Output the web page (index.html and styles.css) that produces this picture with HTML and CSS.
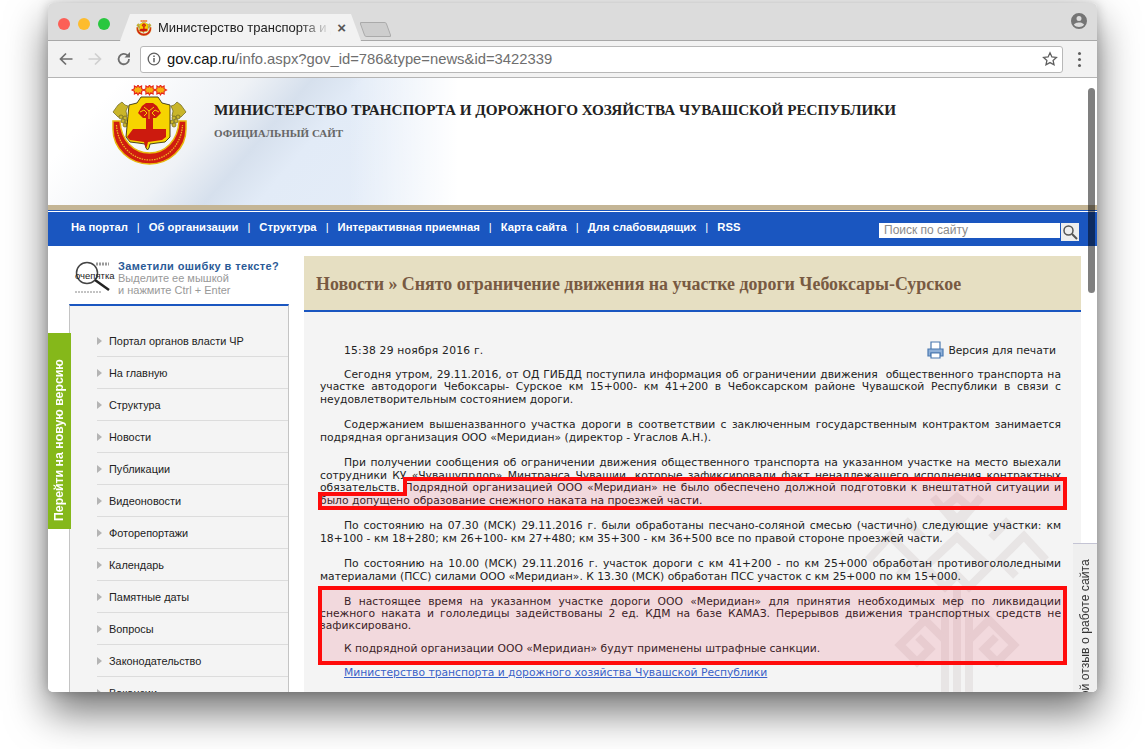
FILE: index.html
```html
<!DOCTYPE html>
<html lang="ru">
<head>
  <meta charset="UTF-8">
  <title>Министерство транспорта и дорожного хозяйства</title>
  <link rel="stylesheet" href="styles.css">
</head>
<body>
  <svg class="defs" width="0" height="0">
    <defs>
      <path id="sun" d="M0-5l1.300 2.300 2.300-1.300 0 2.700 2.400 1.300-2.400 1.300 0 2.700-2.300-1.300L0 5l-1.300-2.300-2.300 1.300 0-2.700-2.400-1.300 2.400-1.300 0-2.700 2.300 1.300z"/>
      <symbol id="emblem" viewBox="0 0 80 80">
        <g fill="#f5b010" stroke="#e8241a" stroke-width="1.100">
          <use href="#sun" x="28" y="5"/>
          <use href="#sun" x="39.500" y="5"/>
          <use href="#sun" x="50.500" y="5"/>
        </g>
        <!-- ribbon -->
        <path d="M3 36h7c1 20 14 32 29.500 32S68 56 69 36h7v8c0 20-17 35-36.500 35S3 64 3 44z" fill="#d01c10" stroke="#e8b80c" stroke-width="1.500"/>
        <path d="M6.500 40c1 20 16 35 33 35s32-15 33-35" fill="none" stroke="#f0c020" stroke-width="1.200" stroke-dasharray="1.500 1"/>
        <!-- grapes -->
        <g fill="#c9b52a" stroke="#6b6420" stroke-width=".7">
          <path d="M3 27l5-7 4-3 3 3 3 1-2 5 1 5-5 2-4-1-3-3z"/>
          <path d="M76 27l-5-7-4-3-3 3-3 1 2 5-1 5 5 2 4-1 3-3z"/>
          <circle cx="11" cy="32" r="2"/><circle cx="15" cy="33" r="2"/><circle cx="13" cy="36" r="2"/><circle cx="17" cy="37" r="2"/><circle cx="15" cy="40" r="2"/>
          <circle cx="68" cy="32" r="2"/><circle cx="64" cy="33" r="2"/><circle cx="66" cy="36" r="2"/><circle cx="62" cy="37" r="2"/><circle cx="64" cy="40" r="2"/>
        </g>
        <!-- shield -->
        <path d="M19 20l8-2 4-6h17l4 6 8 2v32l-5 5-8 1-7 1-1 4-1.500 2-1.500-2-1-4-7-1-8-1-4-5z" fill="#f7d400" stroke="#3a3410" stroke-width=".9"/>
        <path d="M23 44h13V30h7v14h13v8l-4 3-7 1-7 1-1 4-1 2-1-2-1-4-7-1-7-1-3-3z" fill="#cc1a0e"/>
        <path d="M28 28l4-7 4-3h7l4 3 4 7-5 5h-5v1h-3v-1h-5z" fill="#cc1a0e"/>
        <g fill="none" stroke="#f7d400" stroke-width="1">
          <path d="M34 22l5 4 5-4M39 26v8M30 27l4-2 3 3-3 3M49 27l-4-2-3 3 3 3"/>
        </g>
      </symbol>
    </defs>
  </svg>

  <div class="window">
    <div class="tabbar">
      <div class="lights">
        <span class="light red"></span>
        <span class="light amber"></span>
        <span class="light green"></span>
      </div>
      <div class="tab">
        <svg class="favicon" width="16" height="16"><use href="#emblem"/></svg>
        <span class="tab-title">Министерство транспорта и д</span>
        <span class="tab-close">×</span>
      </div>
      <div class="new-tab"></div>
      <svg class="profile" width="16" height="16" viewBox="0 0 16 16">
        <path fill="#757575" fill-rule="evenodd" d="M8 0a8 8 0 1 1 0 16A8 8 0 0 1 8 0zm0 3a2.500 2.500 0 1 0 0 5 2.500 2.500 0 0 0 0-5zM3 11.800C4 13.300 6 14 8 14s4-.7 5-2.200C13 10.300 10 9.400 8 9.400s-5 .9-5 2.400z"/>
      </svg>
    </div>

    <div class="toolbar">
      <svg class="tool" width="16" height="16" viewBox="0 0 16 16"><path d="M14.500 8H3M8 2.500L2.500 8 8 13.500" fill="none" stroke="#6e6e6e" stroke-width="1.700"/></svg>
      <svg class="tool" width="16" height="16" viewBox="0 0 16 16"><path d="M1.500 8H13M8 2.500L13.500 8 8 13.500" fill="none" stroke="#cfcfcf" stroke-width="1.700"/></svg>
      <svg class="tool" width="16" height="16" viewBox="0 0 16 16"><path d="M13 8a5.200 5.200 0 1 1-1.500-3.600" fill="none" stroke="#6e6e6e" stroke-width="1.800"/><path d="M14 1v5.500H8.500z" fill="#6e6e6e"/></svg>
      <div class="omnibox">
        <svg width="14" height="14" viewBox="0 0 14 14"><circle cx="7" cy="7" r="5.800" fill="none" stroke="#5f5f5f" stroke-width="1.300"/><path d="M7 6v4.300M7 3.400v1.500" stroke="#5f5f5f" stroke-width="1.500"/></svg>
        <span class="url"><b>gov.cap.ru</b>/info.aspx?gov_id=786&amp;type=news&amp;id=3422339</span>
        <svg class="star" width="16" height="16" viewBox="0 0 16 16"><path d="M8 1.800l1.900 4.100 4.500.5-3.300 3 .9 4.400L8 11.600l-4 2.200.9-4.400-3.300-3 4.500-.5z" fill="none" stroke="#5f5f5f" stroke-width="1.300"/></svg>
      </div>
      <div class="dots"><i></i><i></i><i></i></div>
    </div>

    <div class="page">
      <div class="site-head">
        <svg class="site-logo" width="80" height="80"><use href="#emblem"/></svg>
        <div class="site-titles">
          <h1>МИНИСТЕРСТВО ТРАНСПОРТА И ДОРОЖНОГО ХОЗЯЙСТВА ЧУВАШСКОЙ РЕСПУБЛИКИ</h1>
          <h4>ОФИЦИАЛЬНЫЙ САЙТ</h4>
        </div>
      </div>
      <div class="tan-line"></div>

      <div class="nav">
        <a>На портал</a><span>|</span>
        <a>Об организации</a><span>|</span>
        <a>Структура</a><span>|</span>
        <a>Интерактивная приемная</a><span>|</span>
        <a>Карта сайта</a><span>|</span>
        <a>Для слабовидящих</a><span>|</span>
        <a>RSS</a>
        <div class="search">
          <div class="search-input">Поиск по сайту</div>
          <div class="search-btn">
            <svg width="16" height="16" viewBox="0 0 16 16"><circle cx="6.500" cy="6.500" r="4.500" fill="none" stroke="#555" stroke-width="1.500"/><path d="M10 10l5 5" stroke="#555" stroke-width="2"/></svg>
          </div>
        </div>
      </div>

      <div class="columns">
        <div class="sidebar">
          <div class="typo">
            <div class="typo-icon">
              <svg width="38" height="38" viewBox="0 0 38 38"><circle cx="13" cy="15" r="10.500" fill="none" stroke="#444" stroke-width="1.500"/><path d="M21 22l14 10" stroke="#222" stroke-width="2.500"/><path d="M22 6h13" stroke="#999" stroke-width="3" stroke-dasharray="2 1"/><path d="M1 34h27" stroke="#888" stroke-width="1" stroke-dasharray="2 1"/></svg>
              <span>очепятка</span>
            </div>
            <div class="typo-text">
              <strong>Заметили ошибку в тексте?</strong>
              Выделите ее мышкой<br>и нажмите Ctrl + Enter
            </div>
          </div>
          <ul class="menu">
            <li>Портал органов власти ЧР</li>
            <li>На главную</li>
            <li>Структура</li>
            <li>Новости</li>
            <li>Публикации</li>
            <li>Видеоновости</li>
            <li>Фоторепортажи</li>
            <li>Календарь</li>
            <li>Памятные даты</li>
            <li>Вопросы</li>
            <li>Законодательство</li>
            <li>Вакансии</li>
          </ul>
        </div>

        <div class="main">
          <h2 class="news-title">Новости » Снято ограничение движения на участке дороги Чебоксары-Сурское</h2>
          <div class="article">
            <svg class="watermark" width="200" height="202" viewBox="860 490 200 202">
              <g fill="none" stroke="#e8e5e5" stroke-width="8">
                <path d="M957 497l-12 10 12 12 12-12zM933 497l24 28 24-28"/>
                <path d="M957 537l-32 30 20 20 12-12 12 12 20-20z"/>
                <path d="M868 560l22-24 24 24-16 16M1046 560l-22-24-24 24 16 16M905 520l18 18M1009 520l-18 18"/>
                <path d="M945 692V610M957 692V590M969 692V610"/>
                <path d="M945 640l-20-20-25 25 17 17 13-13-12-12M969 640l20-20 25 25-17 17-13-13 12-12"/>
              </g>
            </svg>
            <div class="print-row">
              <span class="news-date">15:38 29 ноября 2016 г.</span>
              <span class="print-link">
                <svg width="17" height="18" viewBox="0 0 17 18"><path d="M4 8V1h9v7" fill="#fff" stroke="#4a78b0" stroke-width="1.200"/><path d="M1 8h15v7h-3v-3H4v3H1z" fill="#8fb0d8" stroke="#4a78b0" stroke-width="1.200"/><path d="M4 12h9v5H4z" fill="#fff" stroke="#4a78b0" stroke-width="1.200"/></svg>
                Версия для печати
              </span>
            </div>
            <p>Сегодня утром, 29.11.2016, от ОД ГИБДД поступила информация об ограничении движения &nbsp;общественного транспорта на участке автодороги Чебоксары- Сурское км 15+000- км 41+200 в Чебоксарском районе Чувашской Республики в связи с неудовлетворительным состоянием дороги.</p>
            <p>Содержанием вышеназванного участка дороги в соответствии с заключенным государственным контрактом занимается подрядная организация ООО «Меридиан» (директор - Угаслов А.Н.).</p>
            <p>При получении сообщения об ограничении движения общественного транспорта на указанном участке на место выехали сотрудники КУ «Чувашупрдор» Минтранса Чувашии, которые зафиксировали факт ненадлежащего исполнения контрактных обязательств. Подрядной организацией ООО «Меридиан» не было обеспечено должной подготовки к внештатной ситуации и было допущено образование снежного наката на проезжей части.</p>
            <p>По состоянию на 07.30 (МСК) 29.11.2016 г. были обработаны песчано-соляной смесью (частично) следующие участки: км 18+100 - км 18+280; км 26+100- км 27+480; км 35+300 - км 36+500 все по правой стороне проезжей части.</p>
            <p>По состоянию на 10.00 (МСК) 29.11.2016 г. участок дороги с км 41+200 - по км 25+000 обработан противогололедными материалами (ПСС) силами ООО «Меридиан». К 13.30 (МСК) обработан ПСС участок с км 25+000 по км 15+000.</p>
            <p class="tight">В настоящее время на указанном участке дороги ООО «Меридиан» для принятия необходимых мер по ликвидации снежного наката и гололедицы задействованы 2 ед. КДМ на базе КАМАЗ. Перерывов движения транспортных средств не зафиксировано.</p>
            <p class="tight">К подрядной организации ООО «Меридиан» будут применены штрафные санкции.</p>
            <p class="tight"><a class="source">Министерство транспорта и дорожного хозяйства Чувашской Республики</a></p>
          </div>
        </div>
      </div>

      <svg class="marks" width="1049" height="614" viewBox="0 0 1049 614">
        <path d="M357 401H1017V430H272V416H357z" fill="#e62846" fill-opacity=".13" stroke="#ff0b0b" stroke-width="4"/>
        <rect x="272" y="510" width="745" height="75" fill="#e62846" fill-opacity=".13" stroke="#ff0b0b" stroke-width="4"/>
      </svg>

      <div class="new-version">Перейти на новую версию</div>
      <div class="feedback"><span>Оставьте свой отзыв о работе сайта</span></div>
      <div class="scrollbar"></div>
    </div>
  </div>
</body>
</html>
```

FILE: styles.css
```css
/* Basic reset */
* {
  margin: 0;
  padding: 0;
  box-sizing: border-box;
}
html, body {
  height: 749px;
  overflow: hidden;
}
body {
  background-color: #fff;
  font-family: 'Liberation Sans', Arial, sans-serif;
  color: #222;
}
.defs {
  position: absolute;
}
.window {
  position: relative;
  width: 1049px;
  height: 689px;
  margin: 3px 0 0 48px;
  border-radius: 5px;
  overflow: hidden;
  box-shadow: 0 20px 40px rgba(0, 0, 0, 0.55), 0 0 12px rgba(0, 0, 0, 0.2);
}

/* browser chrome */
.tabbar {
  display: flex;
  align-items: flex-end;
  height: 38px;
  padding-left: 10px;
  background-color: #dcdcdc;
  border-bottom: 1px solid #a8a8a8;
}
.lights {
  display: flex;
  gap: 8px;
  align-self: flex-start;
  margin-top: 15px;
  width: 66px;
}
.light {
  width: 12px;
  height: 12px;
  border-radius: 50%;
}
.red { background-color: #fc5f57; }
.amber { background-color: #fdbc2e; }
.green { background-color: #29c73f; }
.tab {
  display: flex;
  align-items: center;
  gap: 6px;
  flex: none;
  width: 241px;
  height: 27px;
  margin: 0 0 -1px -4px;
  padding: 0 15px 0 16px;
  background-color: #f2f2f2;
  clip-path: polygon(0 100%, 10px 0, 231px 0, 241px 100%);
}
.favicon {
  flex: none;
}
.tab-title {
  flex: 1;
  font-size: 13px;
  white-space: nowrap;
  overflow: hidden;
  color: #222;
  mask-image: linear-gradient(90deg, #000 82%, transparent 100%);
}
.tab-close {
  font-size: 15px;
  font-weight: bold;
  color: #555;
}
.new-tab {
  width: 27px;
  height: 15px;
  margin: 0 0 3px 1px;
  background-color: #cdcdcd;
  border: 1px solid #aaa;
  border-radius: 2px;
  transform: skewX(20deg);
}
.profile {
  margin: 0 10px 11px auto;
}
.toolbar {
  display: flex;
  align-items: center;
  height: 37px;
  padding-left: 10px;
  background-color: #f2f2f2;
  border-bottom: 1px solid #b5b5b5;
}
.tool {
  margin-right: 13px;
}
.omnibox {
  display: flex;
  align-items: center;
  gap: 6px;
  width: 923px;
  height: 27px;
  margin-left: -5px;
  padding: 0 4px 0 6px;
  background-color: #fff;
  border: 1px solid #b8b8b8;
  border-radius: 3px;
}
.url {
  flex: 1;
  font-size: 14.800px;
  color: #6e6e6e;
}
.url b {
  font-weight: normal;
  color: #111;
}
.dots {
  display: flex;
  flex-direction: column;
  gap: 3px;
  margin-left: 15px;
}
.dots i {
  width: 3px;
  height: 3px;
  border-radius: 50%;
  background-color: #5f5f5f;
}

/* page */
.page {
  position: relative;
  height: 614px;
  background-color: #fff;
  overflow: hidden;
}
.site-head {
  display: flex;
  height: 127px;
  padding: 7px 0 0 62px;
  background:
    linear-gradient(90deg, rgba(255, 255, 255, 0) 300px, #fff 410px) no-repeat,
    linear-gradient(131deg, #fff 14%, #eff2f6 38%, #d6e0ed 50%, #e2ebf7 60%, #e6eef9 100%) no-repeat 0 0 / 420px 100%;
}
.site-logo {
  flex: none;
}
.site-titles {
  margin: 16px 0 0 24px;
  font-family: 'Liberation Serif', 'Times New Roman', serif;
}
.site-titles h1 {
  font-size: 15.200px;
  line-height: 18px;
  color: #222;
}
.site-titles h4 {
  margin-top: 7px;
  font-size: 11px;
  line-height: 14px;
  color: #666;
}
.tan-line {
  height: 5px;
  background-color: #c4b595;
}
.nav {
  display: flex;
  align-items: center;
  height: 36px;
  padding: 0 0 3px 23px;
  background-color: #1a56c0;
  border-top: 1px solid #1a56c0;
  box-shadow: inset 0 1px 0 #fff;
  color: #fff;
  font-size: 11.250px;
  font-weight: bold;
}
.nav span {
  margin: 0 9px;
  font-weight: normal;
}
.search {
  display: flex;
  align-items: flex-start;
  margin: 10px 18px 0 auto;
}
.search-input {
  width: 181px;
  height: 15px;
  padding-left: 5px;
  background-color: #fff;
  color: #8a8a8a;
  font-size: 12px;
  font-weight: normal;
  line-height: 15px;
}
.search-btn {
  display: flex;
  align-items: center;
  justify-content: center;
  width: 18px;
  height: 18px;
  margin-left: 1px;
  background-color: #eee;
}
.columns {
  display: flex;
  padding-left: 21px;
}
.sidebar {
  flex: none;
  width: 220px;
}
.typo {
  display: flex;
  height: 58px;
  padding: 12px 0 0 5px;
}
.typo-icon {
  position: relative;
  width: 39px;
  height: 38px;
}
.typo-icon span {
  position: absolute;
  top: 12px;
  left: 1px;
  font-size: 9.500px;
  color: #222;
}
.typo-text {
  margin: 2px 0 0 5px;
  font-size: 11px;
  line-height: 12px;
  color: #999;
}
.typo-text strong {
  display: block;
  color: #2a5a96;
  letter-spacing: 0.4px;
}
.menu {
  height: 400px;
  padding: 19px 0 0 27px;
  list-style: none;
  background-color: #f4f4f4;
  border: 1px solid #c4c4c4;
  border-top: 2px solid #1a56c0;
}
.menu li {
  position: relative;
  height: 32px;
  padding-left: 12px;
  font-size: 10.900px;
  line-height: 32px;
  color: #222;
  border-bottom: 1px solid #dcdcdc;
}
.menu li::before {
  content: '';
  position: absolute;
  top: 12px;
  left: 0;
  border: 4px solid transparent;
  border-left: 5px solid #b4b4b4;
}
.main {
  flex: none;
  width: 777px;
  margin: 10px 0 0 15px;
}
.news-title {
  display: flex;
  align-items: center;
  height: 56px;
  padding: 3px 0 0 12px;
  background-color: #e6dfc2;
  border-bottom: 2px solid #1a56c0;
  font-family: 'Liberation Serif', 'Times New Roman', serif;
  font-size: 17.900px;
  color: #785a42;
}
.article {
  position: relative;
  height: 400px;
  padding: 30px 20px 0 16px;
  background-color: #f4f4f4;
  font-family: 'DejaVu Sans', Verdana, sans-serif;
  font-size: 10.750px;
  line-height: 12.500px;
  color: #222;
}
.watermark {
  position: absolute;
  top: 178px;
  left: 556px;
}
.print-row {
  position: relative;
  display: flex;
  justify-content: space-between;
  align-items: center;
  height: 18px;
  padding: 0 5px 0 24px;
  margin-bottom: 8.500px;
}
.news-date {
  letter-spacing: 0.2px;
}
.print-link {
  display: flex;
  align-items: center;
  gap: 4px;
}
.print-link svg {
  margin-top: -3px;
}
.article p {
  position: relative;
  margin-bottom: 13px;
  text-align: justify;
  text-indent: 24px;
}
.article p.tight {
  margin-top: -0.500px;
  margin-bottom: 12px;
  line-height: 12px;
}
a.source {
  color: #3a62c8;
  text-decoration: underline;
}

/* things lying over the page */
.marks {
  position: absolute;
  top: 0;
  left: 0;
}
.new-version {
  position: absolute;
  top: 255px;
  left: 0;
  width: 23px;
  height: 196px;
  padding-top: 8px;
  background-color: #85b81a;
  color: #fff;
  font-size: 12.300px;
  font-weight: bold;
  line-height: 23px;
  writing-mode: vertical-rl;
  transform: rotate(180deg);
}
.feedback {
  position: absolute;
  top: 465px;
  right: 0;
  display: flex;
  justify-content: flex-end;
  width: 24px;
  height: 149px;
  overflow: hidden;
  padding-bottom: 15px;
  background-color: #efefef;
  border-bottom: 1px solid #c4c4d4;
  font-size: 12.200px;
  line-height: 24px;
  color: #333;
  white-space: nowrap;
  writing-mode: vertical-rl;
  transform: rotate(180deg);
}
.feedback span {
  flex: none;
}
.scrollbar {
  position: absolute;
  top: 10px;
  right: 2px;
  width: 7px;
  height: 205px;
  border-radius: 4px;
  background-color: rgba(0, 0, 0, 0.5);
}
```
